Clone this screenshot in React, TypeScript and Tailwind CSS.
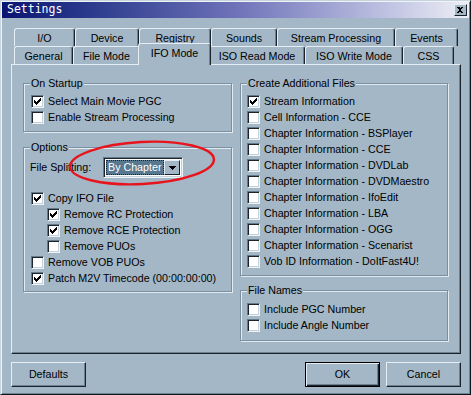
import React from "react";

const F = { fontFamily: '"Liberation Sans", Arial, sans-serif' };

function Check() {
  const cols: [number, number][] = [
    [0, 2], [1, 3], [2, 4], [3, 3], [4, 2], [5, 1], [6, 0],
  ];
  return (
    <svg width="7" height="7" className="absolute left-[2px] top-[2px]" shapeRendering="crispEdges">
      {cols.map(([x, y]) => (
        <rect key={x} x={x} y={y} width="1" height="3" fill="#000" />
      ))}
    </svg>
  );
}

function Box({ checked }: { checked?: boolean }) {
  return (
    <span className="relative inline-block w-[13px] h-[13px] shrink-0 bg-white border border-t-[#64798a] border-l-[#64798a] border-r-[#eef3f6] border-b-[#eef3f6] shadow-[inset_1px_1px_0_#1b242c,inset_-1px_-1px_0_#c5d2dc]">
      {checked && <Check />}
    </span>
  );
}

function Row({ label, checked, indent }: { label: string; checked?: boolean; indent?: boolean }) {
  return (
    <div className={`flex h-4 items-start gap-1 ${indent ? "ml-4" : ""}`}>
      <Box checked={checked} />
      <span className="leading-[13px] whitespace-nowrap">{label}</span>
    </div>
  );
}

function Group({ title, className, children }: { title: string; className?: string; children: React.ReactNode }) {
  return (
    <div className={`relative border border-[#7a8fa0] shadow-[inset_1px_1px_0_#e3ebf1,1px_1px_0_#e3ebf1] ${className ?? ""}`}>
      <span className="absolute left-[6px] top-[-7px] bg-[#a3b7c7] px-[1px] leading-[13px] whitespace-nowrap">{title}</span>
      {children}
    </div>
  );
}

function Tab({ label, w, selected }: { label: string; w: number; selected?: boolean }) {
  return (
    <div
      style={{ width: w }}
      className={`flex shrink-0 items-center justify-center rounded-t-[3px] border-l border-t border-r border-l-[#e6eef3] border-t-[#e6eef3] border-r-[#1b242c] bg-[#a3b7c7] shadow-[inset_-1px_0_0_#6c8192] leading-[13px] whitespace-nowrap ${
        selected ? "relative z-10 -mx-[2px] -mt-[3px] mb-[-1px] h-[22px] pb-[3px]" : "h-[18px] pt-[1px]"
      }`}
    >
      {label}
    </div>
  );
}

function Button({ label, def }: { label: string; def?: boolean }) {
  return (
    <div
      className={`flex h-[25px] w-[75px] items-center justify-center bg-[#a3b7c7] ${
        def
          ? "border border-black shadow-[inset_1px_1px_0_#e6eef3,inset_-1px_-1px_0_#1b242c,inset_-2px_-2px_0_#6c8192]"
          : "border border-t-[#e6eef3] border-l-[#e6eef3] border-r-[#1b242c] border-b-[#1b242c] shadow-[inset_-1px_-1px_0_#6c8192]"
      }`}
    >
      {label}
    </div>
  );
}

export default function App() {
  return (
    <div
      style={F}
      className="relative w-[471px] h-[395px] bg-[#a3b7c7] text-[10.7px] text-black border border-t-[#c7d4de] border-l-[#c7d4de] border-r-[#10181f] border-b-[#10181f] shadow-[inset_1px_1px_0_#eef3f6,inset_-1px_-1px_0_#6c8192] p-[1px] flex flex-col"
    >
      {/* Title bar */}
      <div className="flex h-[16px] items-center justify-between bg-gradient-to-r from-[#0a1272] via-[#6f72b8] to-[#eeeff6] pl-[5px] pr-[2px]">
        <span
          className="text-white text-[11.5px] leading-none"
          style={{ fontFamily: '"DejaVu Sans Mono", "Liberation Mono", monospace' }}
        >
          Settings
        </span>
        <div className="flex h-[12px] w-[13px] items-center justify-center bg-[#a3b7c7] border border-t-[#e6eef3] border-l-[#e6eef3] border-r-[#1b242c] border-b-[#1b242c]">
          <svg width="7" height="6" shapeRendering="crispEdges">
            <path d="M0 0h2l1 1 1-1h2v0L4 3l2 3H4L3 4 2 6H0l2-3z" fill="#000" />
          </svg>
        </div>
      </div>

      {/* Tabs */}
      <div className="mt-[10px] ml-[12px] flex flex-col">
        <div className="flex">
          <Tab label="I/O" w={61} />
          <Tab label="Device" w={64} />
          <Tab label="Registry" w={72} />
          <Tab label="Sounds" w={66} />
          <Tab label="Stream Processing" w={118} />
          <Tab label="Events" w={63} />
        </div>
        <div className="flex items-end">
          <Tab label="General" w={59} />
          <Tab label="File Mode" w={67} />
          <Tab label="IFO Mode" w={73} selected />
          <Tab label="ISO Read Mode" w={96} />
          <Tab label="ISO Write Mode" w={98} />
          <Tab label="CSS" w={51} />
        </div>
      </div>

      {/* Panel */}
      <div className="ml-[9px] w-[450px] h-[290px] border border-t-[#e6eef3] border-l-[#e6eef3] border-r-[#1b242c] border-b-[#1b242c] shadow-[inset_-1px_-1px_0_#6c8192] flex gap-[8px] pl-[11px] pt-[18px]">
        <div className="flex w-[209px] flex-col">
          <Group title="On Startup" className="pl-[7px] pt-[11px] pb-[4px]">
            <Row label="Select Main Movie PGC" checked />
            <Row label="Enable Stream Processing" />
          </Group>
          <Group title="Options" className="mt-[15px] pl-[6px] pt-[9px] pb-[3px]">
            <div className="flex h-[21px] items-center">
              <span className="w-[73px] whitespace-nowrap">File Splitting:</span>
              <div className="flex h-[21px] w-[80px] items-stretch bg-white border border-t-[#64798a] border-l-[#64798a] border-r-[#eef3f6] border-b-[#eef3f6] shadow-[inset_1px_1px_0_#1b242c,inset_-1px_-1px_0_#c5d2dc] p-[2px]">
                <div className="flex flex-1 items-center bg-[#587890] text-white outline outline-1 outline-dotted outline-[#1b242c] -outline-offset-1 pl-[2px]">
                  By Chapter
                </div>
                <div className="flex w-[16px] items-center justify-center bg-[#a3b7c7] border border-t-[#e6eef3] border-l-[#e6eef3] border-r-[#1b242c] border-b-[#1b242c]">
                  <svg width="7" height="4" shapeRendering="crispEdges">
                    <path d="M0 0h7L3.5 4z" fill="#000" />
                  </svg>
                </div>
              </div>
            </div>
            <div className="mt-[14px] pl-[1px]">
              <Row label="Copy IFO File" checked />
              <Row label="Remove RC Protection" checked indent />
              <Row label="Remove RCE Protection" checked indent />
              <Row label="Remove PUOs" indent />
              <Row label="Remove VOB PUOs" />
              <Row label="Patch M2V Timecode (00:00:00:00)" checked />
            </div>
          </Group>
        </div>
        <div className="flex w-[208px] flex-col">
          <Group title="Create Additional Files" className="pl-[6px] pt-[11px] pb-[4px]">
            <Row label="Stream Information" checked />
            <Row label="Cell Information - CCE" />
            <Row label="Chapter Information - BSPlayer" />
            <Row label="Chapter Information - CCE" />
            <Row label="Chapter Information - DVDLab" />
            <Row label="Chapter Information - DVDMaestro" />
            <Row label="Chapter Information - IfoEdit" />
            <Row label="Chapter Information - LBA" />
            <Row label="Chapter Information - OGG" />
            <Row label="Chapter Information - Scenarist" />
            <Row label="Vob ID Information - DoItFast4U!" />
          </Group>
          <Group title="File Names" className="mt-[14px] pl-[6px] pt-[12px] pb-[5px]">
            <Row label="Include PGC Number" />
            <Row label="Include Angle Number" />
          </Group>
        </div>
      </div>

      {/* Buttons */}
      <div className="mt-[8px] ml-[9px] flex w-[450px]">
        <Button label="Defaults" />
        <div className="ml-auto flex gap-[6px]">
          <Button label="OK" def />
          <Button label="Cancel" />
        </div>
      </div>

      {/* Red annotation ellipse */}
      <svg className="pointer-events-none absolute left-[64px] top-[137px]" width="154" height="52">
        <ellipse cx="77" cy="25" rx="72" ry="21" fill="none" stroke="#e8141c" strokeWidth="2.4" transform="rotate(-3 77 25)" />
      </svg>
    </div>
  );
}
